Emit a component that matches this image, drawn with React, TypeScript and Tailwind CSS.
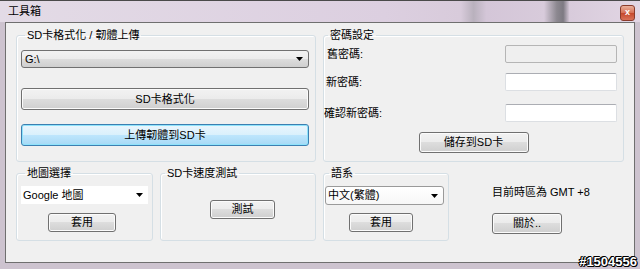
import React from 'react';

const font = { fontFamily: '"Liberation Sans", "Noto Sans CJK TC", sans-serif' };

function GroupBox({ title, className, children }: { title: string; className: string; children?: React.ReactNode }) {
    return (
        <fieldset className={`border border-[#d5dfe5] rounded-[3px] shadow-[inset_1px_1px_0_#ffffff] ${className}`}>
            <legend className="ml-[4px] px-[2px] text-[11px] leading-[14px] text-black">{title}</legend>
            {children}
        </fieldset>
    );
}

function Button({ label, className, focused }: { label: string; className: string; focused?: boolean }) {
    const skin = focused
        ? 'border-[#3c7fb1] bg-[linear-gradient(#eaf6fd_0%,#d9f0fc_50%,#bee6fd_50%,#a7d9f5_100%)] shadow-[inset_0_0_0_1px_#8fe3fb]'
        : 'border-[#707070] bg-[linear-gradient(#f2f2f2_0%,#ebebeb_50%,#dddddd_50%,#cfcfcf_100%)] shadow-[inset_0_0_0_1px_#fbfbfb]';
    return (
        <div className={`flex items-center justify-center border rounded-[3px] text-[11px] leading-none text-black ${skin} ${className}`}>
            {label}
        </div>
    );
}

function Arrow() {
    return (
        <svg width="7" height="4" viewBox="0 0 7 4" className="shrink-0">
            <path d="M0 0h7L3.5 4z" fill="#000" />
        </svg>
    );
}

function Select({ value, className, variant }: { value: string; className: string; variant: 'button' | 'white' | 'border' }) {
    const skin =
        variant === 'button'
            ? 'border border-[#707070] rounded-[3px] bg-[linear-gradient(#f2f2f2_0%,#ebebeb_50%,#dddddd_50%,#cfcfcf_100%)]'
            : variant === 'border'
            ? 'border border-[#9a9a9a] rounded-[3px] bg-[linear-gradient(#ffffff_0%,#f7f7f7_100%)]'
            : 'bg-white';
    return (
        <div className={`flex items-center justify-between pl-[2px] pr-[5px] text-[11px] leading-none text-black ${skin} ${className}`}>
            <span>{value}</span>
            <Arrow />
        </div>
    );
}

function TextBox({ disabled, className }: { disabled?: boolean; className: string }) {
    return (
        <div
            className={`border rounded-[2px] ${disabled ? 'bg-[#efefef] border-[#b5b5b5]' : 'bg-white border-[#dcdfe3] border-t-[#abadb3]'} ${className}`}
        />
    );
}

export default function App() {
    return (
        <div className="relative w-[640px] h-[269px] flex flex-col bg-[#cdc3cf] border-t border-[#4a4a4a]" style={font}>
            {/* Title bar */}
            <div className="h-[21px] flex items-center justify-between pl-[8px] pr-[5px] bg-[linear-gradient(90deg,#e3dbe6_0%,#dccfe0_60%,#d8cbdb_72%,#b9b1bd_74%,#d4c6d8_76%,#d8cbdb_85%,#8c8890_87%,#7d7a82_88%,#d8cbdb_89%,#e2d6e4_100%)]">
                <span className="text-[11px] leading-none text-black">工具箱</span>
                <div className="w-[15px] h-[16px] mt-[2px] rounded-[3px] border border-[#8a3b2b] bg-[linear-gradient(#eab09c_0%,#d66f55_50%,#c5482c_51%,#d97158_100%)] flex items-center justify-center text-white text-[9px] leading-none font-bold">
                    x
                </div>
            </div>

            {/* Client area */}
            <div className="flex-1 mx-[5px] mb-[6px] border border-[#6f6f6f] bg-[#f0f0f0] pl-[10px] pt-[5px] flex flex-col gap-[4px]">
                {/* Top row */}
                <div className="flex gap-[7px]">
                    <GroupBox title="SD卡格式化 / 韌體上傳" className="w-[300px] h-[134px] pl-[4px] pr-[6px]">
                        <Select value="G:\" variant="button" className="mt-[8px] h-[18px] pl-[3px]" />
                        <Button label="SD卡格式化" className="mt-[20px] h-[22px]" />
                        <Button label="上傳韌體到SD卡" focused className="mt-[14px] h-[22px]" />
                    </GroupBox>

                    <GroupBox title="密碼設定" className="w-[301px] h-[134px] pr-[6px]">
                        <div className="mt-[3px] flex items-center justify-between pl-[3px]">
                            <span className="text-[11px] leading-none text-black">舊密碼:</span>
                            <TextBox disabled className="w-[112px] h-[18px]" />
                        </div>
                        <div className="mt-[10px] flex items-center justify-between pl-[2px]">
                            <span className="text-[11px] leading-none text-black">新密碼:</span>
                            <TextBox className="w-[112px] h-[18px]" />
                        </div>
                        <div className="mt-[13px] flex items-center justify-between pl-0">
                            <span className="text-[11px] leading-none text-black">確認新密碼:</span>
                            <TextBox className="w-[112px] h-[18px]" />
                        </div>
                        <div className="mt-[10px] flex justify-center pl-[6px]">
                            <Button label="儲存到SD卡" className="w-[110px] h-[21px]" />
                        </div>
                    </GroupBox>
                </div>

                {/* Bottom row */}
                <div className="flex gap-[7px]">
                    <GroupBox title="地圖選擇" className="w-[137px] h-[75px] pl-[4px] pr-[4px]">
                        <Select value="Google 地圖" variant="white" className="mt-[6px] h-[18px]" />
                        <Button label="套用" className="mt-[9px] ml-[27px] w-[68px] h-[19px]" />
                    </GroupBox>

                    <GroupBox title="SD卡速度測試" className="w-[156px] h-[75px]">
                        <Button label="測試" className="mt-[20px] ml-[49px] w-[65px] h-[19px]" />
                    </GroupBox>

                    <GroupBox title="語系" className="w-[126px] h-[75px] pl-[1px]">
                        <Select value="中文(繁體)" variant="border" className="mt-[6px] w-[119px] h-[19px]" />
                        <Button label="套用" className="mt-[8px] ml-[24px] w-[64px] h-[19px]" />
                    </GroupBox>

                    <div className="flex-1 flex flex-col pl-[36px] pt-[19px]">
                        <span className="text-[11px] leading-[14px] text-black">目前時區為 GMT +8</span>
                        <Button label="關於.." className="mt-[14px] w-[70px] h-[21px]" />
                    </div>
                </div>
            </div>

            {/* Watermark over the window frame */}
            <span className="absolute right-[3px] bottom-[1px] text-[13px] leading-none font-bold text-white [text-shadow:1px_0_0_#000,-1px_0_0_#000,0_1px_0_#000,0_-1px_0_#000,1px_1px_0_#000,-1px_-1px_0_#000]">
                #1504556
            </span>
        </div>
    );
}
